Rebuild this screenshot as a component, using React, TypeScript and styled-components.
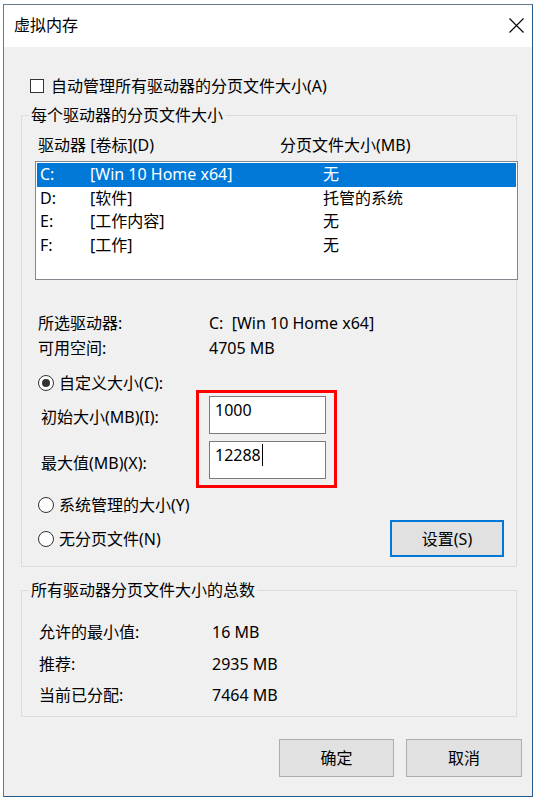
import React from "react";
import styled, { createGlobalStyle } from "styled-components";

const GlobalStyle = createGlobalStyle`
  html, body { margin: 0; padding: 0; background: #ffffff; }
  body {
    font-family: "Noto Sans", "Noto Sans CJK SC", sans-serif;
    font-size: 16px;
    color: #000;
  }
  * { box-sizing: border-box; }
`;

const Window = styled.div`
  margin: 4px 0 0 3px;
  width: 530px;
  height: 793px;
  border: 1px solid #66788a;
  border-right-color: #24598b;
  border-bottom-color: #24598b;
  background: #f0f0f0;
  display: flex;
  flex-direction: column;
`;

const TitleBar = styled.div`
  flex: none;
  height: 42px;
  background: #ffffff;
  display: flex;
  align-items: center;
  justify-content: space-between;
  padding: 0 8px 2px 10px;
`;

const Title = styled.div`
  line-height: 22px;
`;

const CloseIcon = styled.svg`
  width: 15px;
  height: 15px;
  display: block;
`;

const Body = styled.div`
  flex: 1;
  display: flex;
  flex-direction: column;
  padding: 28px 10px 0 17px;
`;

const CheckRow = styled.div`
  display: flex;
  align-items: center;
  gap: 7px;
  height: 22px;
  line-height: 22px;
  margin-left: 9px;
`;

const CheckBox = styled.div`
  width: 14px;
  height: 14px;
  border: 1px solid #333333;
  background: #ffffff;
`;

const Group = styled.div<{ $mt: number; $pb: number }>`
  width: 496px;
  margin-top: ${(p) => p.$mt}px;
  border: 1px solid #dcdcdc;
  padding: 0 0 ${(p) => p.$pb}px 13px;
  display: flex;
  flex-direction: column;
`;

const GroupTitle = styled.div`
  align-self: flex-start;
  margin: -12px 0 0 -6px;
  padding: 0 2px;
  background: #f0f0f0;
  line-height: 22px;
`;

const HeaderRow = styled.div`
  margin-top: 8px;
  display: grid;
  grid-template-columns: 242px 1fr;
  padding-left: 3px;
  line-height: 22px;
`;

const ListBox = styled.div`
  margin-top: 5px;
  margin-right: -2px;
  height: 119px;
  border: 1px solid #828790;
  background: #ffffff;
  padding: 1px;
`;

const ListRow = styled.div<{ $selected?: boolean }>`
  display: grid;
  grid-template-columns: 50px 233px 1fr;
  height: 23.5px;
  line-height: 23.5px;
  padding-left: 3px;
  white-space: pre;
  background: ${(p) => (p.$selected ? "#0078d7" : "transparent")};
  color: ${(p) => (p.$selected ? "#ffffff" : "#000000")};
`;

const InfoGrid = styled.div<{ $mt: number; $label: number; $pl: number; $gap: number }>`
  margin-top: ${(p) => p.$mt}px;
  display: grid;
  grid-template-columns: ${(p) => p.$label}px 1fr;
  row-gap: ${(p) => p.$gap}px;
  padding-left: ${(p) => p.$pl}px;
  line-height: 22px;
  white-space: pre;
`;

const RadioRow = styled.div<{ $mt?: number }>`
  margin-top: ${(p) => p.$mt ?? 0}px;
  display: flex;
  align-items: center;
  gap: 5px;
  height: 22px;
  line-height: 22px;
  padding-left: 3px;
`;

const RadioCircle = styled.div`
  width: 16px;
  height: 16px;
  border-radius: 50%;
  border: 1px solid #333333;
  background: #ffffff;
  display: flex;
  align-items: center;
  justify-content: center;
`;

const RadioDot = styled.div`
  width: 8px;
  height: 8px;
  border-radius: 50%;
  background: #333333;
`;

const SizeRow = styled.div`
  margin-top: -4px;
  display: flex;
  align-items: flex-start;
`;

const SizeLabels = styled.div`
  width: 161px;
  padding: 16px 0 0 6px;
  display: flex;
  flex-direction: column;
  gap: 24px;
  line-height: 22px;
`;

const RedFrame = styled.div`
  border: 3px solid #ff0000;
  padding: 3px 8px 6px 10px;
  display: flex;
  flex-direction: column;
  gap: 7px;
`;

const TextBox = styled.div`
  width: 117px;
  height: 38px;
  border: 1px solid #7a7a7a;
  background: #ffffff;
  padding: 2px 5px;
  line-height: 22px;
  display: flex;
  align-items: flex-start;
`;

const Caret = styled.span`
  display: inline-block;
  width: 1px;
  height: 22px;
  margin-left: 1px;
  background: #000000;
`;

const BottomRow = styled.div`
  margin-top: 4px;
  display: flex;
  align-items: center;
  justify-content: space-between;
  padding-right: 12px;
`;

const Button = styled.div<{ $w: number; $h: number; $default?: boolean }>`
  width: ${(p) => p.$w}px;
  height: ${(p) => p.$h}px;
  background: #e1e1e1;
  border: ${(p) => (p.$default ? "2px solid #0078d7" : "1px solid #adadad")};
  display: flex;
  align-items: center;
  justify-content: center;
  line-height: 22px;
`;

const ButtonBar = styled.div`
  margin-top: 22px;
  display: flex;
  justify-content: flex-end;
  gap: 12px;
`;

const drives = [
  { letter: "C:", label: "[Win 10 Home x64]", size: "无", selected: true },
  { letter: "D:", label: "[软件]", size: "托管的系统" },
  { letter: "E:", label: "[工作内容]", size: "无" },
  { letter: "F:", label: "[工作]", size: "无" },
];

function Radio({ checked, label, mt }: { checked?: boolean; label: string; mt?: number }) {
  return (
    <RadioRow $mt={mt}>
      <RadioCircle>{checked && <RadioDot />}</RadioCircle>
      <span>{label}</span>
    </RadioRow>
  );
}

export default function App() {
  return (
    <>
      <GlobalStyle />
      <Window>
        <TitleBar>
          <Title>虚拟内存</Title>
          <CloseIcon viewBox="0 0 15 15">
            <path d="M0.5 0.5 L14.5 14.5 M14.5 0.5 L0.5 14.5" stroke="#000" strokeWidth="1.1" fill="none" />
          </CloseIcon>
        </TitleBar>
        <Body>
          <CheckRow>
            <CheckBox />
            <span>自动管理所有驱动器的分页文件大小(A)</span>
          </CheckRow>

          <Group $mt={18} $pb={9}>
            <GroupTitle>每个驱动器的分页文件大小</GroupTitle>
            <HeaderRow>
              <span>驱动器 [卷标](D)</span>
              <span>分页文件大小(MB)</span>
            </HeaderRow>
            <ListBox>
              {drives.map((d) => (
                <ListRow key={d.letter} $selected={d.selected}>
                  <span>{d.letter}</span>
                  <span>{d.label}</span>
                  <span>{d.size}</span>
                </ListRow>
              ))}
            </ListBox>
            <InfoGrid $mt={32} $label={171} $pl={3} $gap={3}>
              <span>所选驱动器:</span>
              <span>C:  [Win 10 Home x64]</span>
              <span>可用空间:</span>
              <span>4705 MB</span>
            </InfoGrid>
            <Radio checked label="自定义大小(C):" mt={13} />
            <SizeRow>
              <SizeLabels>
                <span>初始大小(MB)(I):</span>
                <span>最大值(MB)(X):</span>
              </SizeLabels>
              <RedFrame>
                <TextBox>1000</TextBox>
                <TextBox>
                  12288
                  <Caret />
                </TextBox>
              </RedFrame>
            </SizeRow>
            <Radio label="系统管理的大小(Y)" mt={6} />
            <BottomRow>
              <Radio label="无分页文件(N)" />
              <Button $w={114} $h={37} $default>
                设置(S)
              </Button>
            </BottomRow>
          </Group>

          <Group $mt={23} $pb={10}>
            <GroupTitle>所有驱动器分页文件大小的总数</GroupTitle>
            <InfoGrid $mt={20} $label={173} $pl={4} $gap={9.5}>
              <span>允许的最小值:</span>
              <span>16 MB</span>
              <span>推荐:</span>
              <span>2935 MB</span>
              <span>当前已分配:</span>
              <span>7464 MB</span>
            </InfoGrid>
          </Group>

          <ButtonBar>
            <Button $w={115} $h={38}>确定</Button>
            <Button $w={116} $h={38}>取消</Button>
          </ButtonBar>
        </Body>
      </Window>
    </>
  );
}
